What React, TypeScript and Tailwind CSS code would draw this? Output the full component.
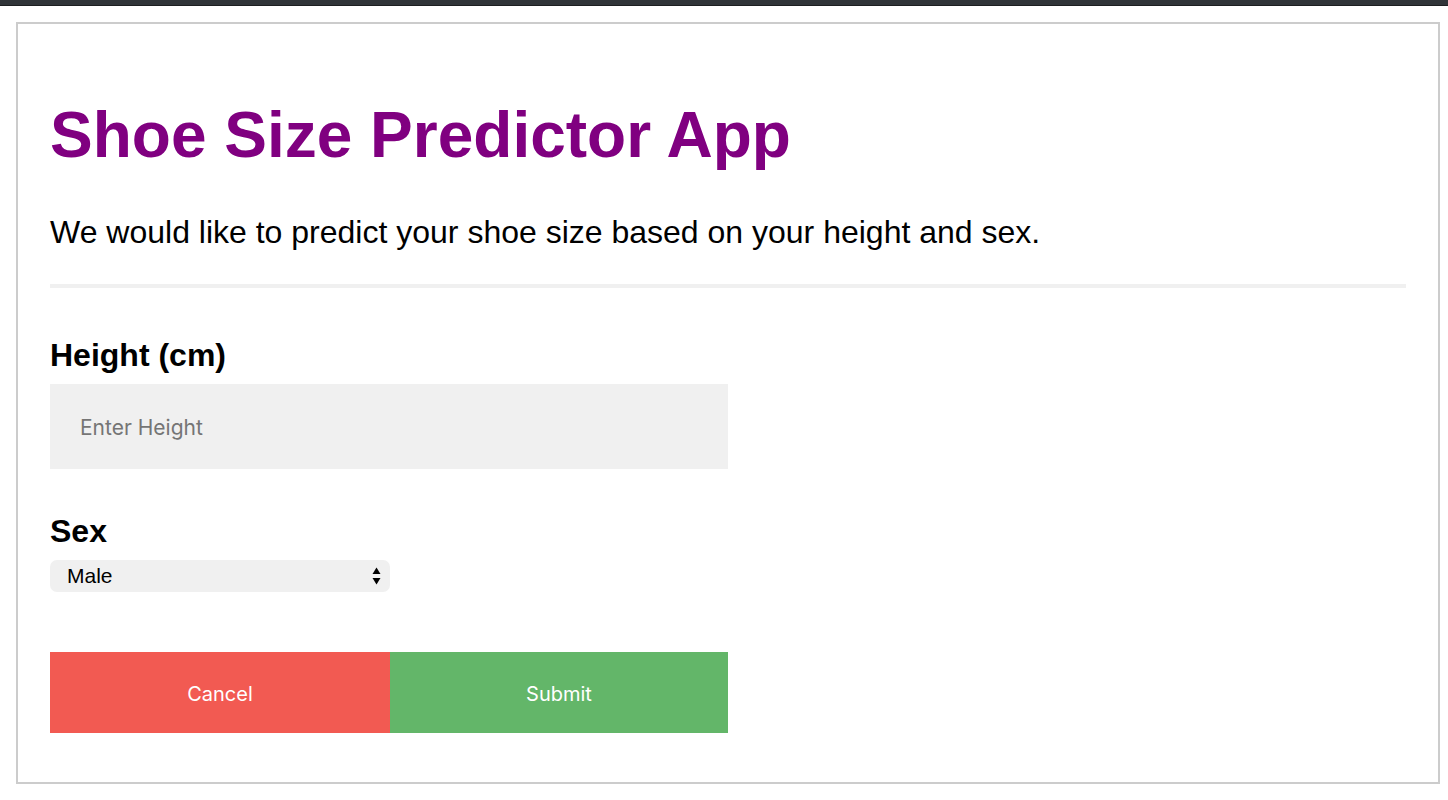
import React, { useState } from 'react';

export default function App() {
  const [height, setHeight] = useState('');
  const [sex, setSex] = useState('male');

  return (
    <div className="min-h-screen bg-white font-['Liberation_Sans',Arial,sans-serif] text-black">
      {/* window chrome edge */}
      <div className="h-[6px] bg-[#303438] border-b border-[#1c1e20]" />

      <div className="ml-4 mr-2 mt-4 h-[762px] border-2 border-[#cccccc] px-8 pt-[79px]">
        <h1 className="text-[64px] leading-[64px] font-bold text-[#800080]">Shoe Size Predictor App</h1>
        <p className="mt-[49px] text-[32px] leading-[32px]">
          We would like to predict your shoe size based on your height and sex.
        </p>
        <hr className="mt-[36px] h-[4px] border-0 bg-[#f0f0f0]" />

        <form onSubmit={(e) => e.preventDefault()}>
          <label className="mt-[51px] block text-[32px] leading-[32px] font-bold">Height (cm)</label>
          <input
            value={height}
            onChange={(e) => setHeight(e.target.value)}
            placeholder="Enter Height"
            className="mt-[13px] block h-[85px] w-[678px] bg-[#f0f0f0] pl-[30px] pt-[2px] font-['Inter',sans-serif] text-[21px] text-black outline-none placeholder:text-[#757575]"
          />

          <label className="mt-[46px] block text-[32px] leading-[32px] font-bold">Sex</label>
          <div className="relative mt-[13px] w-[340px]">
            <select
              value={sex}
              onChange={(e) => setSex(e.target.value)}
              className="block h-[32px] w-full appearance-none rounded-[7px] bg-[#f0f0f0] pl-[17px] text-[21px] leading-[32px] outline-none"
            >
              <option value="male">Male</option>
              <option value="female">Female</option>
            </select>
            <svg
              className="pointer-events-none absolute right-[9px] top-[7px]"
              width="9"
              height="18"
              viewBox="0 0 9 18"
            >
              <path d="M4.5 0.5 L8.5 7 L0.5 7 Z" fill="#000" />
              <path d="M0.5 11 L8.5 11 L4.5 17.5 Z" fill="#000" />
            </svg>
          </div>

          <div className="mt-[60px] flex w-[678px]">
            <button
              type="button"
              className="h-[81px] w-[340px] bg-[#f25a52] pt-[2px] font-['Inter',sans-serif] text-[20px] text-white"
            >
              Cancel
            </button>
            <button
              type="submit"
              className="h-[81px] w-[338px] bg-[#63b669] pt-[2px] font-['Inter',sans-serif] text-[20px] text-white"
            >
              Submit
            </button>
          </div>
        </form>
      </div>
    </div>
  );
}
